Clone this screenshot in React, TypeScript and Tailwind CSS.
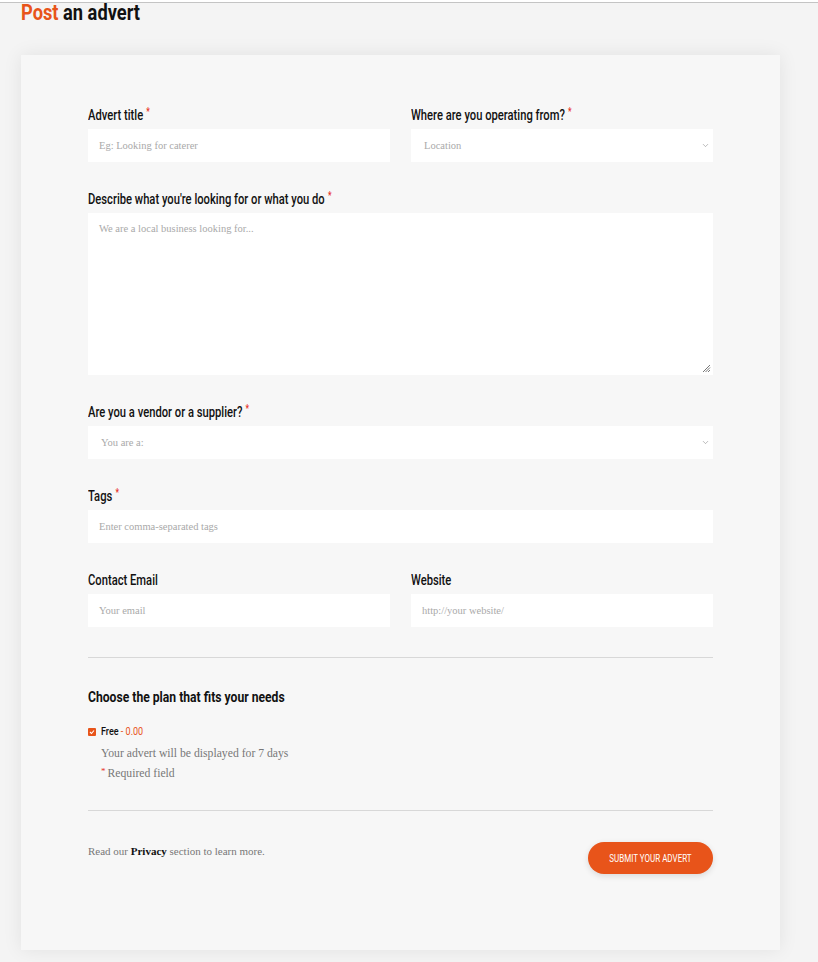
import {ChevronDown} from "lucide-react";

const head = "font-['Roboto','Liberation_Sans',Arial,sans-serif]";
const body = "font-['Liberation_Serif','DejaVu_Serif',serif]";

function Label({text, required}: {text: string, required?: boolean}) {
    return (
        <div className={`${head} h-[20px] leading-[18px] mb-[3px] text-[14px] font-medium text-[#111] whitespace-nowrap`}>
            <span className="inline-block origin-left scale-x-[0.8]">
                {text}
                {required && <span className="text-[#e8301f] text-[10px] ml-[4px] align-top leading-[12px]">*</span>}
            </span>
        </div>
    );
}

function Input({placeholder}: {placeholder: string}) {
    return (
        <div className={`${body} h-[33px] bg-white flex items-center px-[11px] text-[10.5px] text-[#a9a9a9]`}>
            {placeholder}
        </div>
    );
}

function Select({placeholder}: {placeholder: string}) {
    return (
        <div className={`${body} h-[33px] bg-white flex items-center justify-between pl-[13px] pr-[3px] text-[10.5px] text-[#a9a9a9]`}>
            <span>{placeholder}</span>
            <ChevronDown size={9} strokeWidth={1.5} className="text-[#888]"/>
        </div>
    );
}

export default function App() {
    return (
        <div className="min-h-screen bg-[#f4f4f4] pb-[12px]">
            <div className="h-[2px] bg-white"/>
            <div className="border-t border-[#c4c4c4]"/>
            <h1 className={`${head} font-bold text-[22px] leading-[22px] pl-[21px] -mt-[1px] whitespace-nowrap`}>
                <span className="inline-block origin-left scale-x-[0.83]">
                    <span className="text-[#e8541a]">Post</span> <span className="text-[#111]">an advert</span>
                </span>
            </h1>

            <div className="ml-[21px] mt-[31px] w-[759px] h-[895px] bg-[#f7f7f7] shadow-[0_0_18px_rgba(0,0,0,0.08)] px-[67px] pt-[51px]">
                <div className="grid grid-cols-2 gap-x-[21px]">
                    <div>
                        <Label text="Advert title" required/>
                        <Input placeholder="Eg: Looking for caterer"/>
                    </div>
                    <div>
                        <Label text="Where are you operating from?" required/>
                        <Select placeholder="Location"/>
                    </div>
                </div>

                <div className="mt-[28px]">
                    <Label text="Describe what you're looking for or what you do" required/>
                    <div className={`${body} relative h-[162px] bg-white px-[11px] pt-[8px] text-[10.5px] text-[#a9a9a9]`}>
                        We are a local business looking for...
                        <svg width="9" height="9" viewBox="0 0 9 9" className="absolute right-[2px] bottom-[2px]">
                            <path d="M8 1L1 8M8 3.5L3.5 8M8 6L6 8" stroke="#777" strokeWidth="1"/>
                        </svg>
                    </div>
                </div>

                <div className="mt-[28px]">
                    <Label text="Are you a vendor or a supplier?" required/>
                    <Select placeholder="You are a:"/>
                </div>

                <div className="mt-[28px]">
                    <Label text="Tags" required/>
                    <Input placeholder="Enter comma-separated tags"/>
                </div>

                <div className="grid grid-cols-2 gap-x-[21px] mt-[28px]">
                    <div>
                        <Label text="Contact Email"/>
                        <Input placeholder="Your email"/>
                    </div>
                    <div>
                        <Label text="Website"/>
                        <Input placeholder="http://your website/"/>
                    </div>
                </div>

                <hr className="border-[#d8d8d8] mt-[30px]"/>

                <h2 className={`${head} font-bold text-[15px] leading-[20px] text-[#111] mt-[29px] whitespace-nowrap`}>
                    <span className="inline-block origin-left scale-x-[0.81]">Choose the plan that fits your needs</span>
                </h2>

                <div className="mt-[17px] flex items-center gap-[5px]">
                    <span className="w-[8px] h-[8px] bg-[#e8541a] rounded-[1px] flex items-center justify-center">
                        <svg width="6" height="6" viewBox="0 0 6 6">
                            <path d="M1 3L2.5 4.5L5 1.5" stroke="white" strokeWidth="1.1" fill="none"/>
                        </svg>
                    </span>
                    <span className={`${head} text-[11px] leading-[16px] font-medium text-[#111] whitespace-nowrap`}>
                        <span className="inline-block origin-left scale-x-[0.82]">
                            Free <span className="text-[#e8541a] font-normal">- 0.00</span>
                        </span>
                    </span>
                </div>
                <p className={`${body} text-[11.7px] leading-[20px] text-[#777] pl-[13px] mt-[4px]`}>
                    Your advert will be displayed for 7 days
                </p>
                <p className={`${body} text-[11.7px] leading-[20px] text-[#777] pl-[13px]`}>
                    <span className="text-[#e8301f] text-[9px] relative -top-[3px] mr-[2px]">*</span>Required field
                </p>

                <hr className="border-[#d8d8d8] mt-[26px]"/>

                <div className="flex items-start justify-between mt-[31px]">
                    <p className={`${body} text-[11px] leading-[14px] mt-[2px] text-[#777]`}>
                        Read our <span className="text-[#111] font-bold">Privacy</span> section to learn more.
                    </p>
                    <button
                        type="button"
                        className={`${head} h-[32px] w-[125px] rounded-full bg-[#e8541a] text-white text-[10px] uppercase shadow-[0_2px_6px_rgba(0,0,0,0.12)] whitespace-nowrap`}>
                        <span className="inline-block scale-x-[0.8]">Submit your advert</span>
                    </button>
                </div>
            </div>
        </div>
    )
}
